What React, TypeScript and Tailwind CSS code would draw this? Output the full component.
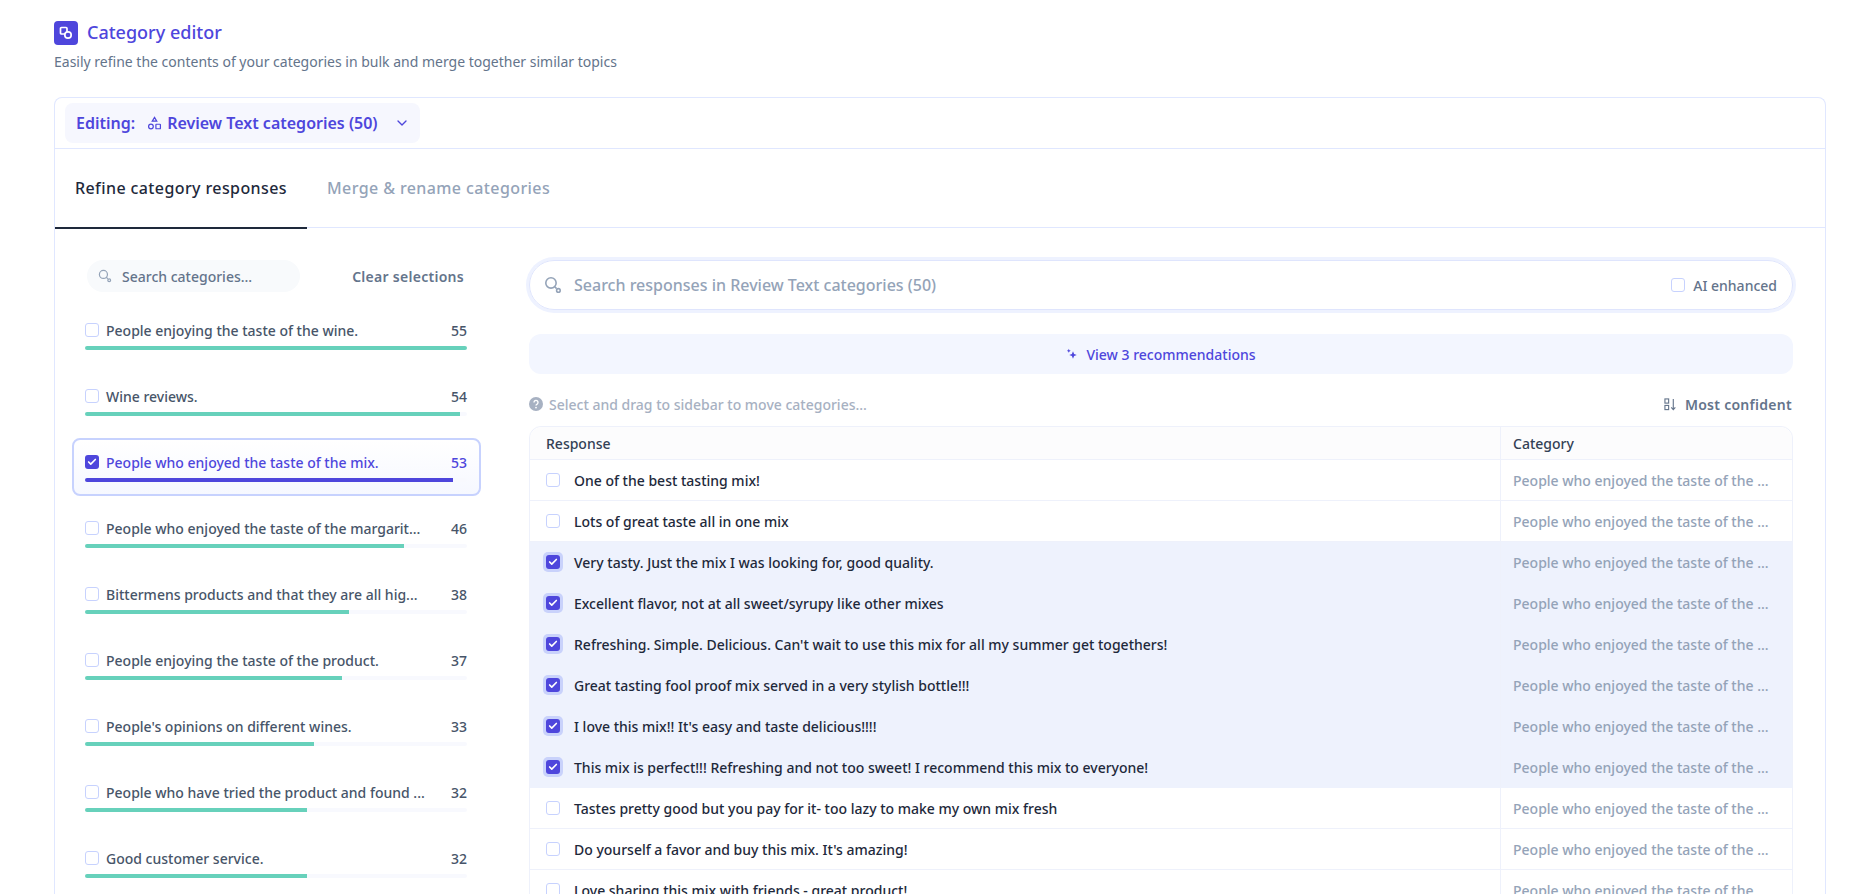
import React from "react";
import { ChevronDown, Check } from "lucide-react";

const categories = [
  { label: "People enjoying the taste of the wine.", count: 55 },
  { label: "Wine reviews.", count: 54 },
  { label: "People who enjoyed the taste of the mix.", count: 53, active: true },
  { label: "People who enjoyed the taste of the margarit...", count: 46 },
  { label: "Bittermens products and that they are all hig...", count: 38 },
  { label: "People enjoying the taste of the product.", count: 37 },
  { label: "People's opinions on different wines.", count: 33 },
  { label: "People who have tried the product and found ...", count: 32 },
  { label: "Good customer service.", count: 32 },
];

const responses = [
  { text: "One of the best tasting mix!" },
  { text: "Lots of great taste all in one mix" },
  { text: "Very tasty. Just the mix I was looking for, good quality.", on: true },
  { text: "Excellent flavor, not at all sweet/syrupy like other mixes", on: true },
  { text: "Refreshing. Simple. Delicious. Can't wait to use this mix for all my summer get togethers!", on: true },
  { text: "Great tasting fool proof mix served in a very stylish bottle!!!", on: true },
  { text: "I love this mix!! It's easy and taste delicious!!!!", on: true },
  { text: "This mix is perfect!!! Refreshing and not too sweet! I recommend this mix to everyone!", on: true },
  { text: "Tastes pretty good but you pay for it- too lazy to make my own mix fresh" },
  { text: "Do yourself a favor and buy this mix. It's amazing!" },
  { text: "Love sharing this mix with friends - great product!" },
];

const Checkbox = ({ checked = false }: { checked?: boolean }) =>
  checked ? (
    <span className="flex h-[14px] w-[14px] shrink-0 items-center justify-center rounded-[3px] bg-[#4e46dc]">
      <Check className="h-[10px] w-[10px] text-white" strokeWidth={4} />
    </span>
  ) : (
    <span className="block h-[14px] w-[14px] shrink-0 rounded-[3px] border border-[#c7d2fe] bg-white" />
  );

// magnifier with the little ring on its handle
const SearchIcon = ({ className }: { className: string }) => (
  <svg viewBox="0 0 16 16" fill="none" stroke="currentColor" strokeWidth="1.4" className={className}>
    <circle cx="6.2" cy="6.2" r="4.6" />
    <path d="M9.6 9.6l1.6 1.6" />
    <circle cx="12.8" cy="12.8" r="1.6" />
  </svg>
);

const App = () => {
  return (
    <div className="h-screen overflow-hidden bg-white pl-[54px] pr-[42px] pt-[21px] font-['Noto_Sans',sans-serif]">
      {/* Page heading */}
      <div className="flex h-6 items-center">
        <span className="flex h-6 w-6 items-center justify-center rounded-[4px] bg-[#4e46dc]">
          <svg viewBox="0 0 16 16" fill="none" stroke="white" strokeWidth="1.7" className="h-4 w-4">
            <rect x="2.5" y="2.5" width="6.5" height="6.5" rx="1" />
            <circle cx="10" cy="10" r="3.2" fill="#4e46dc" />
          </svg>
        </span>
        <h1 className="ml-[9px] -mt-[2px] text-[18px] font-medium leading-6 text-[#4e46dc]">Category editor</h1>
      </div>
      <p className="mt-[7px] text-[14px] leading-5 text-[#64748b]">
        Easily refine the contents of your categories in bulk and merge together similar topics
      </p>

      <div className="mt-[25px] h-[900px] rounded-t-lg border border-b-0 border-[#e0e7ff]">
        {/* Editing selector */}
        <div className="border-b border-[#e0e7ff] pb-[5px] pl-[10px] pt-[5px]">
          <div className="flex h-10 w-[355px] items-center whitespace-nowrap rounded-lg bg-[#f6f7fe] pl-[11px] text-[16px] font-semibold text-[#4e46dc]">
            <span>Editing:</span>
            <svg viewBox="0 0 16 16" fill="none" stroke="currentColor" strokeWidth="1.3" className="ml-[12px] h-[15px] w-[15px]">
              <path d="M8 1.5l2.4 4H5.6z" />
              <circle cx="4.2" cy="11.2" r="2.5" />
              <rect x="9.5" y="8.8" width="4.8" height="4.8" rx=".6" />
            </svg>
            <span className="ml-[5px]">Review Text categories (50)</span>
            <ChevronDown className="ml-[16px] h-[16px] w-[16px]" strokeWidth={2} />
          </div>
        </div>

        {/* Tabs */}
        <div className="flex h-[79px] border-b border-[#e0e7ff] text-[16px] font-medium tracking-[0.025em]">
          <div className="flex h-[80px] w-[252px] items-center justify-center border-b-2 border-[#1e293b] text-[#1e293b]">
            Refine category responses
          </div>
          <div className="ml-5 flex items-center text-[#94a3b8]">Merge &amp; rename categories</div>
        </div>

        <div className="flex pl-[17px] pt-[32px]">
          {/* Categories sidebar */}
          <div className="w-[409px] shrink-0">
            <div className="mb-[14px] ml-[15px] mr-[17px] flex items-center justify-between">
              <div className="flex h-8 w-[213px] items-center rounded-full bg-[#f8fafc] pl-[11px] text-[14px] font-medium text-[#64748b]">
                <SearchIcon className="h-[14px] w-[14px] text-[#94a3b8]" />
                <span className="ml-[10px]">Search categories...</span>
              </div>
              <button className="text-[14px] font-semibold tracking-[0.02em] text-[#64748b]">Clear selections</button>
            </div>

            {categories.map((c) => (
              <div
                key={c.label}
                className={`mb-2 h-[58px] rounded-lg border-2 pl-[11px] pr-[12px] pt-3 ${
                  c.active ? "border-[#c7d2fe] bg-linear-to-b from-white to-[#f6f8ff]" : "border-transparent"
                }`}
              >
                <div className={`flex h-5 items-center text-[14px] font-medium ${c.active ? "text-[#4e46dc]" : "text-[#475569]"}`}>
                  <Checkbox checked={c.active} />
                  <span className="ml-[7px] flex-1">{c.label}</span>
                  <span>{c.count}</span>
                </div>
                <div className="mt-[6px] h-1 overflow-hidden rounded-full bg-[#f8f9fe]">
                  <div
                    className={`h-full ${c.active ? "bg-[#4e46dc]" : "bg-[#67d1bb]"}`}
                    style={{ width: `${(c.count / 55) * 100}%` }}
                  />
                </div>
              </div>
            ))}
          </div>

          {/* Responses */}
          <div className="ml-[48px] w-[1264px] shrink-0">
            <div className="flex h-[50px] items-center rounded-full border border-[#dfe5fd] pl-[14px] pr-[15px] shadow-[0_0_0_3px_#eef2ff]">
              <SearchIcon className="h-[18px] w-[18px] text-[#94a3b8]" />
              <span className="ml-[12px] flex-1 text-[16px] font-medium text-[#94a3b8]">Search responses in Review Text categories (50)</span>
              <Checkbox />
              <span className="ml-2 text-[14px] font-medium text-[#64748b]">AI enhanced</span>
            </div>

            <div className="mt-6 flex h-10 items-center justify-center rounded-xl bg-[#f3f6ff] text-[14px] font-medium text-[#4e46dc]">
              <svg viewBox="0 0 12 12" fill="currentColor" className="mr-[8px] h-3 w-3">
                <path d="M7 3.2l1.1 2.7 2.7 1.1-2.7 1.1-1.1 2.7-1.1-2.7-2.7-1.1 2.7-1.1z" />
                <path d="M2.8 .8l.6 1.4 1.4.6-1.4.6-.6 1.4-.6-1.4-1.4-.6 1.4-.6z" />
              </svg>
              View 3 recommendations
            </div>

            <div className="mt-5 flex h-5 items-center justify-between text-[14px]">
              <div className="flex items-center font-medium text-[#a7b1c2]">
                <svg viewBox="0 0 14 14" className="h-[14px] w-[14px]">
                  <circle cx="7" cy="7" r="7" fill="currentColor" />
                  <path d="M5 5.4a2 2 0 1 1 3.1 1.7c-.7.4-1.1.8-1.1 1.5" fill="none" stroke="white" strokeWidth="1.4" />
                  <circle cx="7" cy="10.6" r=".9" fill="white" />
                </svg>
                <span className="ml-[6px]">Select and drag to sidebar to move categories...</span>
              </div>
              <div className="mr-px flex items-center font-semibold tracking-[0.02em] text-[#64748b]">
                <svg viewBox="0 0 14 14" fill="none" stroke="currentColor" strokeWidth="1.2" className="mr-[8px] h-[13px] w-[13px]">
                  <rect x="1" y="1" width="4" height="4.5" />
                  <rect x="1" y="8" width="4" height="4.5" />
                  <path d="M10 1v11.5M7.8 10.2L10 12.5l2.2-2.3" />
                </svg>
                Most confident
              </div>
            </div>

            {/* Table */}
            <div className="mt-3 rounded-t-xl border border-[#eef1fb] text-[14px]">
              <div className="grid h-[33px] grid-cols-[971px_1fr] rounded-t-xl border-b border-[#eef1fb] bg-[#fcfcfd] font-medium text-[#334155]">
                <div className="flex items-center border-r border-[#eef1fb] pl-4">Response</div>
                <div className="flex items-center pl-3">Category</div>
              </div>
              {responses.map((r) => (
                <div
                  key={r.text}
                  className={`grid h-[41px] grid-cols-[971px_1fr] border-b ${
                    r.on ? "border-[#eef2fd] bg-[#eef2fd]" : "border-[#eef1fb] bg-white"
                  }`}
                >
                  <div className="flex items-center border-r border-[#eef1fb] pl-4 font-medium text-[#1e293b]">
                    <span className={`-ml-[3px] flex h-5 w-5 items-center justify-center rounded-[5px] ${r.on ? "bg-[#c9d2fb]" : ""}`}>
                      <Checkbox checked={r.on} />
                    </span>
                    <span className="ml-[11px]">{r.text}</span>
                  </div>
                  <div className="flex items-center pl-3 font-medium text-[#94a3b8]">People who enjoyed the taste of the ...</div>
                </div>
              ))}
            </div>
          </div>
        </div>
      </div>
    </div>
  );
};

export default App;
